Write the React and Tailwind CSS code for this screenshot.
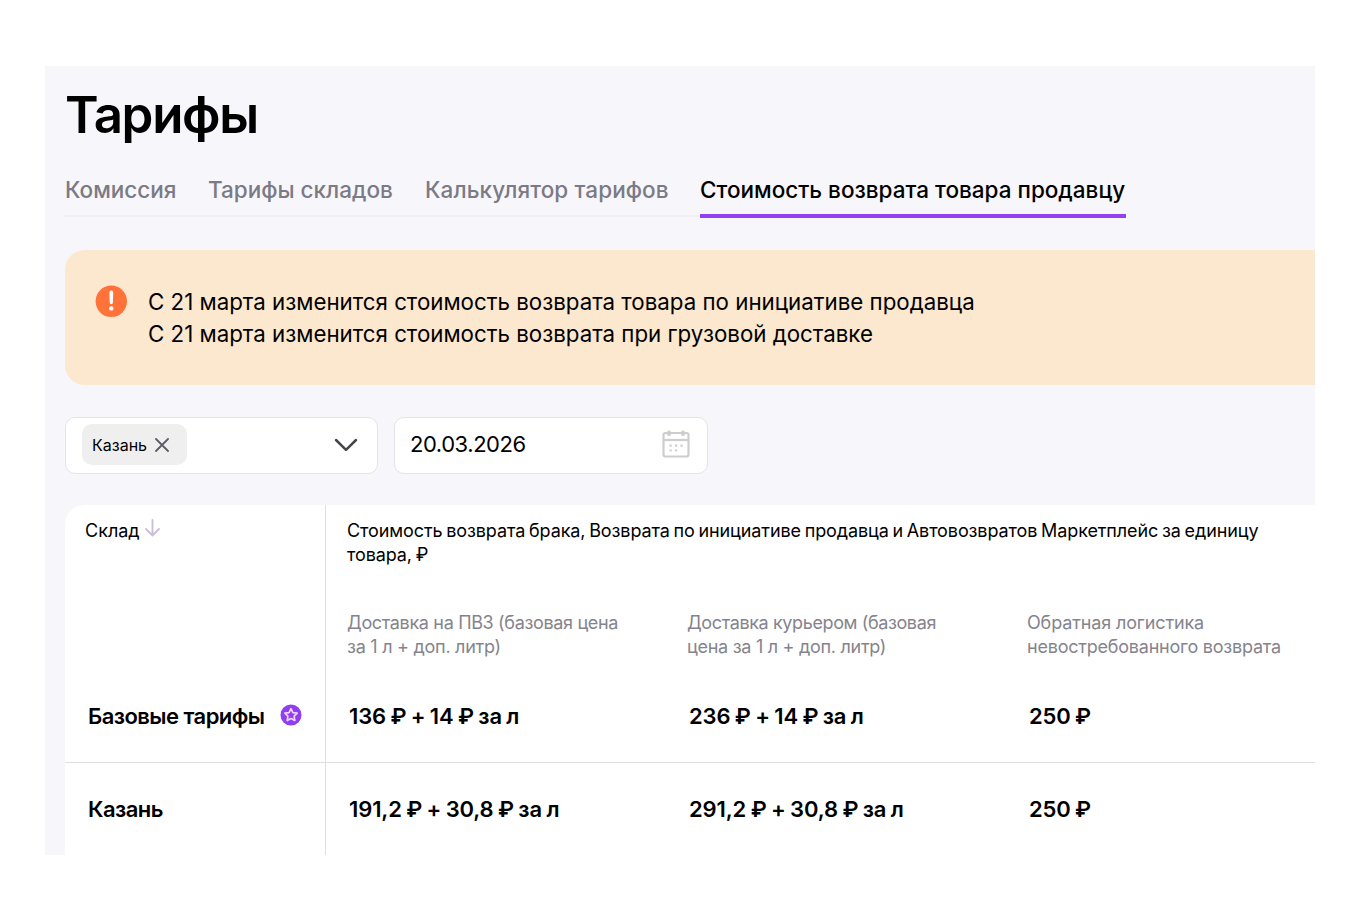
const TABS = [
  { label: "Комиссия", cls: "w-[143px]" },
  { label: "Тарифы складов", cls: "w-[217px]" },
  { label: "Калькулятор тарифов", cls: "w-[275px] tracking-[0.09px]" },
];

const COLUMNS = [
  [
    { text: "Доставка на ПВЗ (базовая цена", cls: "tracking-[-0.34px]" },
    { text: "за 1 л + доп. литр)", cls: "tracking-[-0.26px]" },
  ],
  [
    { text: "Доставка курьером (базовая", cls: "tracking-[-0.38px]" },
    { text: "цена за 1 л + доп. литр)", cls: "tracking-[-0.28px]" },
  ],
  [
    { text: "Обратная логистика", cls: "tracking-[-0.14px]" },
    { text: "невостребованного возврата", cls: "tracking-[-0.22px]" },
  ],
];

const ROWS = [
  {
    name: "Базовые тарифы",
    badge: true,
    cls: "h-[92px] border-b",
    values: ["136 ₽ + 14 ₽ за л", "236 ₽ + 14 ₽ за л", "250 ₽"],
  },
  {
    name: "Казань",
    badge: false,
    cls: "h-[93px]",
    values: ["191,2 ₽ + 30,8 ₽ за л", "291,2 ₽ + 30,8 ₽ за л", "250 ₽"],
  },
];

function AlertIcon() {
  return (
    <svg className="mt-[-1px] ml-[-1px] size-8 shrink-0" viewBox="0 0 32 32">
      <circle cx="16.3" cy="16.3" r="15.7" fill="#ff733b" />
      <path d="M14.400 7.400a1.900 1.900 0 0 1 3.800 0l-.3 10.200a1.600 1.600 0 0 1-3.200 0z" fill="#fff" />
      <circle cx="16.300" cy="23.400" r="2.200" fill="#fff" />
    </svg>
  );
}

function StarBadge() {
  return (
    <svg className="mt-[-3px] ml-[15px] size-[22px] shrink-0" viewBox="0 0 22 22">
      <circle cx="11" cy="11" r="10.500" fill="#8f3ff0" />
      <path
        d="M11 4.700l1.900 3.900 4.300.6-3.100 3 .7 4.300-3.800-2-3.800 2 .7-4.300-3.100-3 4.300-.6z"
        fill="none"
        stroke="#f3d3ff"
        strokeWidth="1.700"
        strokeLinejoin="round"
      />
    </svg>
  );
}

function CalendarIcon() {
  return (
    <svg className="size-7" viewBox="0 0 28 28" fill="none" stroke="#cdcdd0" strokeWidth="2.200">
      <rect x="1.500" y="3" width="25" height="23.500" rx="2" />
      <path d="M1.500 10h25" />
      <path d="M7 2.500v1.500M21 2.500v1.500" strokeWidth="4" strokeLinecap="round" />
      <path d="M7.500 15.700h2.200M13 15.700h2.200M18.500 15.700h2.200M7.500 20.500h2.200M13 20.500h2.200" />
    </svg>
  );
}

function CloseIcon() {
  return (
    <svg className="ml-[8px] size-[14px]" viewBox="0 0 14 14">
      <path d="M1 1l12 12M13 1L1 13" fill="none" stroke="#5c5c62" strokeWidth="1.800" strokeLinecap="round" />
    </svg>
  );
}

function ChevronIcon() {
  return (
    <svg className="h-[14px] w-6" viewBox="0 0 24 14">
      <path d="M2 2l10 9.800L22 2" fill="none" stroke="#45454b" strokeWidth="2.500" strokeLinecap="round" strokeLinejoin="round" />
    </svg>
  );
}

function SortIcon() {
  return (
    <svg className="ml-[5px] h-[18px] w-4" viewBox="0 0 16 18">
      <path d="M7.500 1v15M1 10l6.500 6.500L14 10" fill="none" stroke="#cbbfda" strokeWidth="1.900" strokeLinecap="round" strokeLinejoin="round" />
    </svg>
  );
}

export default function App() {
  return (
    <div className="flex h-[921px] w-[1360px] flex-col overflow-hidden bg-white font-['Inter','Liberation_Sans',sans-serif] text-black">
      <div className="mt-[66px] ml-[45px] flex h-[789px] w-[1270px] flex-col overflow-hidden bg-[#f6f6fb] pl-5">
        <h1 className="mt-[18px] h-[62px] shrink-0 text-[51px] leading-[62px] font-semibold tracking-[-1.3px] whitespace-nowrap">
          Тарифы
        </h1>

        <nav className="mt-[26px] flex h-[46px] shrink-0 items-start text-[22.5px] leading-[35px] font-medium whitespace-nowrap text-[#7b7a85]">
          {TABS.map((t) => (
            <div key={t.label} className={"h-[45px] shrink-0 border-b-2 border-[#efeff4] " + t.cls}>
              {t.label}
            </div>
          ))}
          <div className="h-[46px] w-[426px] border-b-4 border-[#9340ef] text-black">
            Стоимость возврата товара продавцу
          </div>
        </nav>

        <section className="mt-8 flex h-[135px] shrink-0 rounded-l-[20px] bg-[#fce8cf] pt-[36px] pl-[31px]">
          <AlertIcon />
          <div className="ml-[21px] text-[22.3px] leading-[31.5px] whitespace-nowrap">
            <p>С 21 марта изменится стоимость возврата товара по инициативе продавца</p>
            <p>С 21 марта изменится стоимость возврата при грузовой доставке</p>
          </div>
        </section>

        <div className="mt-8 flex h-[57px] shrink-0 gap-4">
          <div className="flex w-[313px] items-center justify-between rounded-[10px] border border-[#e4e4e8] bg-white pr-[19px] pb-[2px] pl-4">
            <div className="flex h-[41px] w-[105px] items-center rounded-[10px] bg-[#efeff0] pl-[10px] text-[16px]">
              <span>Казань</span>
              <CloseIcon />
            </div>
            <ChevronIcon />
          </div>
          <div className="flex w-[314px] items-center justify-between rounded-[10px] border border-[#e4e4e8] bg-white pr-[17px] pb-[3px] pl-[15px] text-[22px] tracking-[-0.45px]">
            <span>20.03.2026</span>
            <CalendarIcon />
          </div>
        </div>

        <div className="mt-[31px] flex h-[351px] shrink-0 flex-col rounded-tl-[20px] bg-white">
          <div className="flex h-[166px] shrink-0">
            <div className="flex w-[261px] shrink-0 items-start border-r border-[#dfdfe3] pt-[14px] pl-5 text-[18px] leading-[24px]">
              <span>Склад</span>
              <SortIcon />
            </div>
            <div className="pt-[14px] pl-[21px]">
              <div className="text-[18px] leading-[24px] tracking-[-0.1px] whitespace-nowrap [word-spacing:-1.2px]">
                <p>Стоимость возврата брака, Возврата по инициативе продавца и Автовозвратов Маркетплейс за единицу</p>
                <p>товара, ₽</p>
              </div>
              <div className="mt-[44px] flex text-[18px] leading-[23.5px] whitespace-nowrap text-[#85848d]">
                {COLUMNS.map((lines) => (
                  <div key={lines[0].text} className="w-[340px] shrink-0">
                    {lines.map((l) => (
                      <p key={l.text} className={l.cls}>{l.text}</p>
                    ))}
                  </div>
                ))}
              </div>
            </div>
          </div>
          {ROWS.map((r) => (
            <div
              key={r.name}
              className={"flex shrink-0 items-center border-[#dfdfe3] text-[22px] font-semibold whitespace-nowrap " + r.cls}
            >
              <div className="flex h-full w-[261px] shrink-0 items-center border-r border-[#dfdfe3] pl-[23px] tracking-[-0.55px]">
                {r.name}
                {r.badge && <StarBadge />}
              </div>
              {r.values.map((v, i) => (
                <div key={i} className="ml-[23px] w-[317px] shrink-0 tracking-[-0.12px] [word-spacing:-1px]">{v}</div>
              ))}
            </div>
          ))}
        </div>
      </div>
    </div>
  );
}
